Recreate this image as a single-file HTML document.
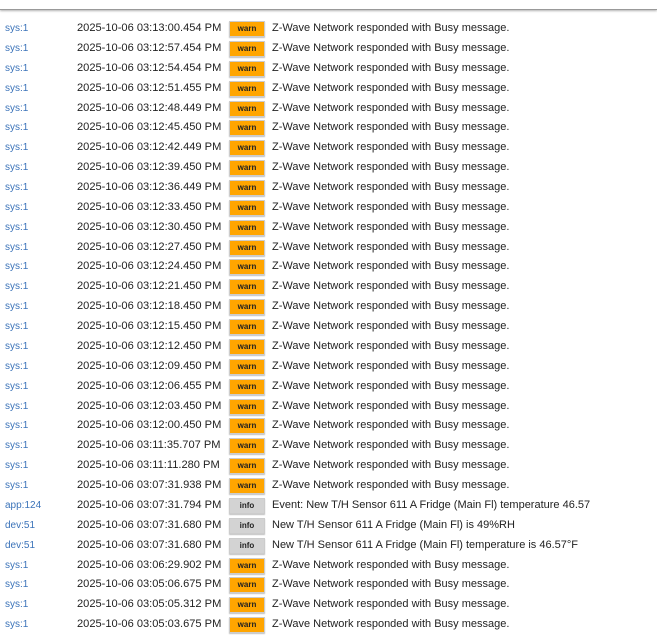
<!DOCTYPE html>
<html><head><style>
body{margin:0;width:657px;height:634px;background:#fff;font-family:"Liberation Sans",sans-serif;overflow:hidden;position:relative}
.top{position:absolute;left:0;top:0;width:657px;height:9px;background:#fff;border-bottom:1px solid #999;box-shadow:0 1px 2px rgba(0,0,0,.3)}
.r{position:absolute;left:0;height:20px;width:657px}
.s{position:absolute;left:5px;top:4px;font-size:10px;color:#3b73b9}
.t{position:absolute;left:77px;top:3px;font-size:11.1px;color:#222}
.b{position:absolute;left:229px;top:2px;width:34px;height:14px;border:1px solid #ccc;box-shadow:0 1px 1px rgba(0,0,0,.25);font-size:8px;font-weight:bold;text-align:center;line-height:14px;color:#222}
.w{background:#ffa500}.i{background:#d3d3d3}
.m{position:absolute;left:272px;top:3px;font-size:11px;color:#222;white-space:nowrap}
</style></head><body>
<div class="top"></div>
<div id="c"></div>
<script>
var rows=[
["sys:1","03:13:00.454","w"],["sys:1","03:12:57.454","w"],["sys:1","03:12:54.454","w"],["sys:1","03:12:51.455","w"],["sys:1","03:12:48.449","w"],["sys:1","03:12:45.450","w"],["sys:1","03:12:42.449","w"],["sys:1","03:12:39.450","w"],["sys:1","03:12:36.449","w"],["sys:1","03:12:33.450","w"],["sys:1","03:12:30.450","w"],["sys:1","03:12:27.450","w"],["sys:1","03:12:24.450","w"],["sys:1","03:12:21.450","w"],["sys:1","03:12:18.450","w"],["sys:1","03:12:15.450","w"],["sys:1","03:12:12.450","w"],["sys:1","03:12:09.450","w"],["sys:1","03:12:06.455","w"],["sys:1","03:12:03.450","w"],["sys:1","03:12:00.450","w"],["sys:1","03:11:35.707","w"],["sys:1","03:11:11.280","w"],["sys:1","03:07:31.938","w"],
["app:124","03:07:31.794","i","Event: New T/H Sensor 611 A Fridge (Main Fl) temperature 46.57"],
["dev:51","03:07:31.680","i","New T/H Sensor 611 A Fridge (Main Fl) is 49%RH"],
["dev:51","03:07:31.680","i","New T/H Sensor 611 A Fridge (Main Fl) temperature is 46.57°F"],
["sys:1","03:06:29.902","w"],["sys:1","03:05:06.675","w"],["sys:1","03:05:05.312","w"],["sys:1","03:05:03.675","w"]];
var h="";
rows.forEach(function(r,k){var y=19+k*19.87;
h+='<div class="r" style="top:'+y.toFixed(1)+'px"><span class="s">'+r[0]+'</span><span class="t">2025-10-06 '+r[1]+' PM</span><span class="b '+r[2]+'">'+(r[2]=="w"?"warn":"info")+'</span><span class="m">'+(r[3]||"Z-Wave Network responded with Busy message.")+'</span></div>';});
document.getElementById("c").innerHTML=h;
</script>
</body></html>
